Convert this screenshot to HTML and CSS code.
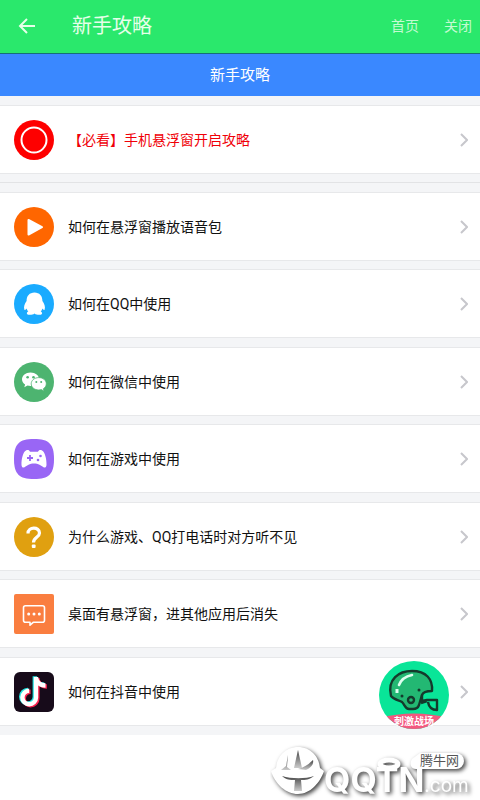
FILE: index.html
```html
<!DOCTYPE html>
<html lang="zh-CN">
<head>
<meta charset="utf-8">
<meta name="viewport" content="width=device-width, initial-scale=1">
<title>新手攻略</title>
<link rel="stylesheet" href="styles.css">
</head>
<body>
<header class="appbar">
  <button class="back" type="button" aria-label="返回">
    <svg width="18" height="18" viewBox="0 0 18 18"><path d="M17 9H2.500M9 2L2 9l7 7" fill="none" stroke="currentColor" stroke-width="2"/></svg>
  </button>
  <h1 class="title">新手攻略</h1>
  <nav class="actions"><a href="#home">首页</a><a href="#close">关闭</a></nav>
</header>
<h2 class="banner">新手攻略</h2>
<main class="content">
  <ul class="list pinned">
    <li><a class="row alert" href="#float">
      <svg class="icon" viewBox="0 0 40 40"><circle cx="20" cy="20" r="20" fill="#fe0000"/><circle cx="20" cy="20" r="12.500" fill="none" stroke="#fff" stroke-width="2"/></svg>
      <span class="label">【必看】手机悬浮窗开启攻略</span>
      <svg class="chevron" viewBox="0 0 8 14"><path d="M1 1l6 6-6 6"/></svg></a></li>
  </ul>
  <ul class="list">
    <li><a class="row" href="#voice">
      <svg class="icon" viewBox="0 0 40 40"><circle cx="20" cy="20" r="20" fill="#ff6600"/><path d="M14.500 13v14.500L28 20.200z" fill="#fff" stroke="#fff" stroke-width="2" stroke-linejoin="round"/></svg>
      <span class="label">如何在悬浮窗播放语音包</span>
      <svg class="chevron" viewBox="0 0 8 14"><path d="M1 1l6 6-6 6"/></svg></a></li>
    <li><a class="row" href="#qq">
      <svg class="icon" viewBox="0 0 40 40"><circle cx="20" cy="20" r="20" fill="#1aabff"/><path d="M20.500 8.500c-5 0-8 3.500-7.900 8.500-1.800 2.500-3.300 6-2.200 8.700.7.600 1.600-.4 2.200-1.300.3 1.300.9 2.300 1.700 3.200-1.700.6-2.100 2.700 0 3.100 2.300.4 4.600 0 6.200-1.300 1.600 1.300 4 1.700 6.200 1.300 2.100-.4 1.700-2.500 0-3.100.8-.9 1.400-1.900 1.700-3.200.6.900 1.500 1.900 2.200 1.300 1.100-2.700-.4-6.200-2.200-8.700.1-5-2.900-8.500-7.900-8.500z" fill="#fff"/></svg>
      <span class="label">如何在QQ中使用</span>
      <svg class="chevron" viewBox="0 0 8 14"><path d="M1 1l6 6-6 6"/></svg></a></li>
    <li><a class="row" href="#wechat">
      <svg class="icon" viewBox="0 0 40 40"><circle cx="20" cy="20" r="20" fill="#4db470"/><path d="M16.500 10.500c-4.900 0-8.500 3-8.500 6.800 0 2.200 1.200 4 3.100 5.200l-.8 2.800 3.200-1.700c1 .3 2 .4 3 .4 4.900 0 8.700-3 8.700-6.700s-3.800-6.800-8.700-6.800z" fill="#fff"/><path d="M24.800 15.600c-4.300 0-7.600 2.800-7.600 6.200s3.300 6.200 7.600 6.200c.9 0 1.700-.1 2.500-.4l2.800 1.600-.7-2.500c1.800-1.200 2.900-2.900 2.900-4.900 0-3.400-3.200-6.200-7.500-6.200z" fill="#fff" stroke="#4db470" stroke-width=".8"/><g fill="#4db470"><circle cx="13.600" cy="15.300" r="1.300"/><circle cx="19.500" cy="15.300" r="1.300"/><circle cx="22.300" cy="20" r="1"/><circle cx="27.200" cy="20" r="1"/></g></svg>
      <span class="label">如何在微信中使用</span>
      <svg class="chevron" viewBox="0 0 8 14"><path d="M1 1l6 6-6 6"/></svg></a></li>
    <li><a class="row" href="#game">
      <svg class="icon" viewBox="0 0 40 40"><path d="M20 0C35 0 40 5 40 20s-5 20-20 20S0 35 0 20 5 0 20 0z" fill="#9966f5"/><path d="M12 11.500c2-.9 3.300-.2 4 1.200h8c.7-1.400 2-2.100 4-1.200 3 1.200 4.700 9 4.500 14.500-.1 2.800-2.500 3.200-4 1.600l-3-1.900c-3-1.600-8-1.600-11 0l-3 1.900c-1.500 1.600-3.900 1.200-4-1.600-.2-5.500 1.500-13.300 4.500-14.500z" fill="#fff"/><path d="M16 16v6M13 19h6" stroke="#9966f5" stroke-width="1.800"/><circle cx="26.500" cy="17" r="1.300" fill="#9966f5"/><circle cx="24" cy="21" r="1.300" fill="#9966f5"/></svg>
      <span class="label">如何在游戏中使用</span>
      <svg class="chevron" viewBox="0 0 8 14"><path d="M1 1l6 6-6 6"/></svg></a></li>
    <li><a class="row" href="#sound">
      <svg class="icon" viewBox="0 0 40 40"><circle cx="20" cy="20" r="20" fill="#e0a010"/><path d="M14 16.500c0-7 11.500-7 11.500-.5 0 4.500-6 4.200-6 9.500" fill="none" stroke="#fff" stroke-width="3.200"/><rect x="17.800" y="27.500" width="3.800" height="3.600" rx="1" fill="#fff"/></svg>
      <span class="label">为什么游戏、QQ打电话时对方听不见</span>
      <svg class="chevron" viewBox="0 0 8 14"><path d="M1 1l6 6-6 6"/></svg></a></li>
    <li><a class="row" href="#desktop">
      <svg class="icon" viewBox="0 0 40 40"><rect width="40" height="40" rx="2" fill="#fa7e40"/><path d="M11.500 11.700h17a2 2 0 0 1 2 2v12.500a2 2 0 0 1-2 2H19.500l-3.500 3v-3h-4.500a2 2 0 0 1-2-2V13.700a2 2 0 0 1 2-2z" fill="none" stroke="#fff" stroke-width="1.600" stroke-linejoin="round"/><g fill="#fff"><circle cx="14.700" cy="20" r="1.500"/><circle cx="20" cy="20" r="1.500"/><circle cx="25.300" cy="20" r="1.500"/></g></svg>
      <span class="label">桌面有悬浮窗，进其他应用后消失</span>
      <svg class="chevron" viewBox="0 0 8 14"><path d="M1 1l6 6-6 6"/></svg></a></li>
    <li><a class="row" href="#douyin">
      <svg class="icon" viewBox="0 0 40 40"><rect width="40" height="40" rx="6" fill="#170b1a"/><g fill="none" stroke-width="4.400"><path d="M22 5v20.500a6.800 6.800 0 1 1-6.800-6.800M22 5c0 5 4 8.500 9.500 8.500" stroke="#25e5e2" transform="translate(-1.200 -.8)"/><path d="M22 5v20.500a6.800 6.800 0 1 1-6.800-6.800M22 5c0 5 4 8.500 9.500 8.500" stroke="#f8224f" transform="translate(1.400 1)"/><path d="M22 5v20.500a6.800 6.800 0 1 1-6.800-6.800M22 5c0 5 4 8.500 9.500 8.500" stroke="#fff"/></g></svg>
      <span class="label">如何在抖音中使用</span>
      <svg class="chevron" viewBox="0 0 8 14"><path d="M1 1l6 6-6 6"/></svg></a></li>
  </ul>
</main>
<button class="float" type="button" aria-label="悬浮窗">
  <svg width="70" height="68" viewBox="0 0 70 68"><defs><clipPath id="disc"><ellipse cx="35" cy="34" rx="35" ry="34"/></clipPath></defs><g clip-path="url(#disc)"><path d="M0 0h70v68H0z" fill="#09e598"/><path d="M0 57q35-9 70 0v11H0z" fill="#f4587f"/></g><path d="M12 35C8 18 20 10 33 10c14 0 21 8 20 20-4 0-9 1-10 4l-3 10c-1 3-3 4-6 4h-4c-4 0-4-4-7-7-3-2-8-2-11-6z" fill="#23b873" stroke="#143a2c" stroke-width="2.400" stroke-linejoin="round"/><path d="M20 24q3-8 13-10" fill="none" stroke="#dffff0" stroke-width="2.600" stroke-linecap="round"/><path d="M18 28v4" stroke="#dffff0" stroke-width="3"/><path d="M43 34v6l5-1h10v10c-5 0-8-2-9-8M42 42l6-2" fill="none" stroke="#143a2c" stroke-width="2.400" stroke-linejoin="round"/><circle cx="32" cy="39" r="3" fill="none" stroke="#143a2c" stroke-width="2.400"/><circle cx="40" cy="29" r="1.500" fill="#143a2c"/><circle cx="23" cy="35" r="1.500" fill="#143a2c"/><text x="35" y="64" text-anchor="middle" class="float-text">刺激战场</text></svg>
</button>
<svg class="watermark" viewBox="0 0 210 56" role="img" aria-label="腾牛网 QQTN.com">
  <defs><linearGradient id="shade" x1="0" y1="0" x2="0" y2="1"><stop offset="0" stop-color="#444"/><stop offset="1" stop-color="#ccc"/></linearGradient></defs>
  <g class="mark">
    <path d="M28 3c12 0 21 9 22 21l4 3c-4 12-14 23-26 23S5 40 1 27l5-3C7 12 16 3 28 3z"/>
    <ellipse cx="119" cy="20" rx="9" ry="4" class="mark-ring"/>
    <path d="M150 9h36a8 8 0 0 1 0 16h-40c-5 0-7-5-4-10z"/>
    <text x="54" y="48" class="mark-name">QQTN<tspan class="mark-com">.com</tspan></text>
  </g>
  <g fill="url(#shade)"><path d="M28 6l4 18h-8z"/><path d="M18 11l-2 11-5 4h10l-4-3z"/><path d="M43 16c-4 4-8 7-15 9l8 1c5-2 8-6 7-10z"/><path d="M12 32c9 3 24 3 32 0-5 4-8 4-13 4l1 11h-8l1-11c-5 0-9 0-13-4z"/></g>
  <text x="150" y="21" class="mark-tag">腾牛网</text>
</svg>
</body>
</html>
```
FILE: styles.css
```css
* { box-sizing: border-box; }
body {
  margin: 0;
  position: relative;
  min-height: 100vh;
  background: #fff;
  color: #111;
  font-family: Roboto, "Noto Sans CJK SC", sans-serif;
  font-size: 14px;
}
a { color: inherit; text-decoration: none; }
h1, h2, ul { margin: 0; padding: 0; font-weight: 400; list-style: none; }
button { padding: 0; border: 0; background: none; color: inherit; font: inherit; }
svg { display: block; }
.appbar {
  display: flex;
  align-items: center;
  height: 54px;
  padding: 0 8px 2px 18px;
  background: #2ae86c;
  border-bottom: 1px solid #176f76;
  color: #e6ffe9;
}
.title { flex: 1; margin-left: 36px; font-size: 20px; line-height: 24px; }
.actions { display: flex; gap: 25px; line-height: 20px; color: #c4fbd2; }
.banner {
  background: #3a88ff;
  color: #fff;
  font-size: 15px;
  line-height: 42px;
  text-align: center;
}
.content { padding: 9px 0; background: #f4f5f7; }
.pinned { margin-bottom: 9px; padding-bottom: 8px; border-bottom: 1px solid #e2e3e5; }
.list li + li { margin-top: 8px; }
.list li:nth-child(odd) { margin-top: 9px; }
.list li:first-child { margin-top: 0; }
.row {
  display: flex;
  align-items: center;
  height: 69px;
  padding: 0 12px 0 14px;
  background: #fff;
  border: solid #e7e8ea;
  border-width: 1px 0;
}
.icon { width: 40px; height: 40px; }
.label { flex: 1; margin-left: 14px; padding-bottom: 2px; }
.alert .label { color: #f00008; }
.chevron { width: 8px; height: 14px; fill: none; stroke: #c7c7cc; stroke-width: 2; }
.float { position: absolute; right: 31px; bottom: 71px; }
.float-text { fill: #fff; font-size: 10px; font-weight: 700; }
.watermark { position: absolute; right: 0; bottom: 0; width: 210px; height: 56px; }
.mark { fill: #fff; filter: drop-shadow(2px 2px 2px #444); }
.mark-ring { fill: none; stroke: #fff; stroke-width: 5; }
.mark-name { font: 700 34px Inter, sans-serif; }
.mark-com { font: 400 19px Inter, sans-serif; }
.mark-tag { fill: #555; font-size: 13px; }
```
